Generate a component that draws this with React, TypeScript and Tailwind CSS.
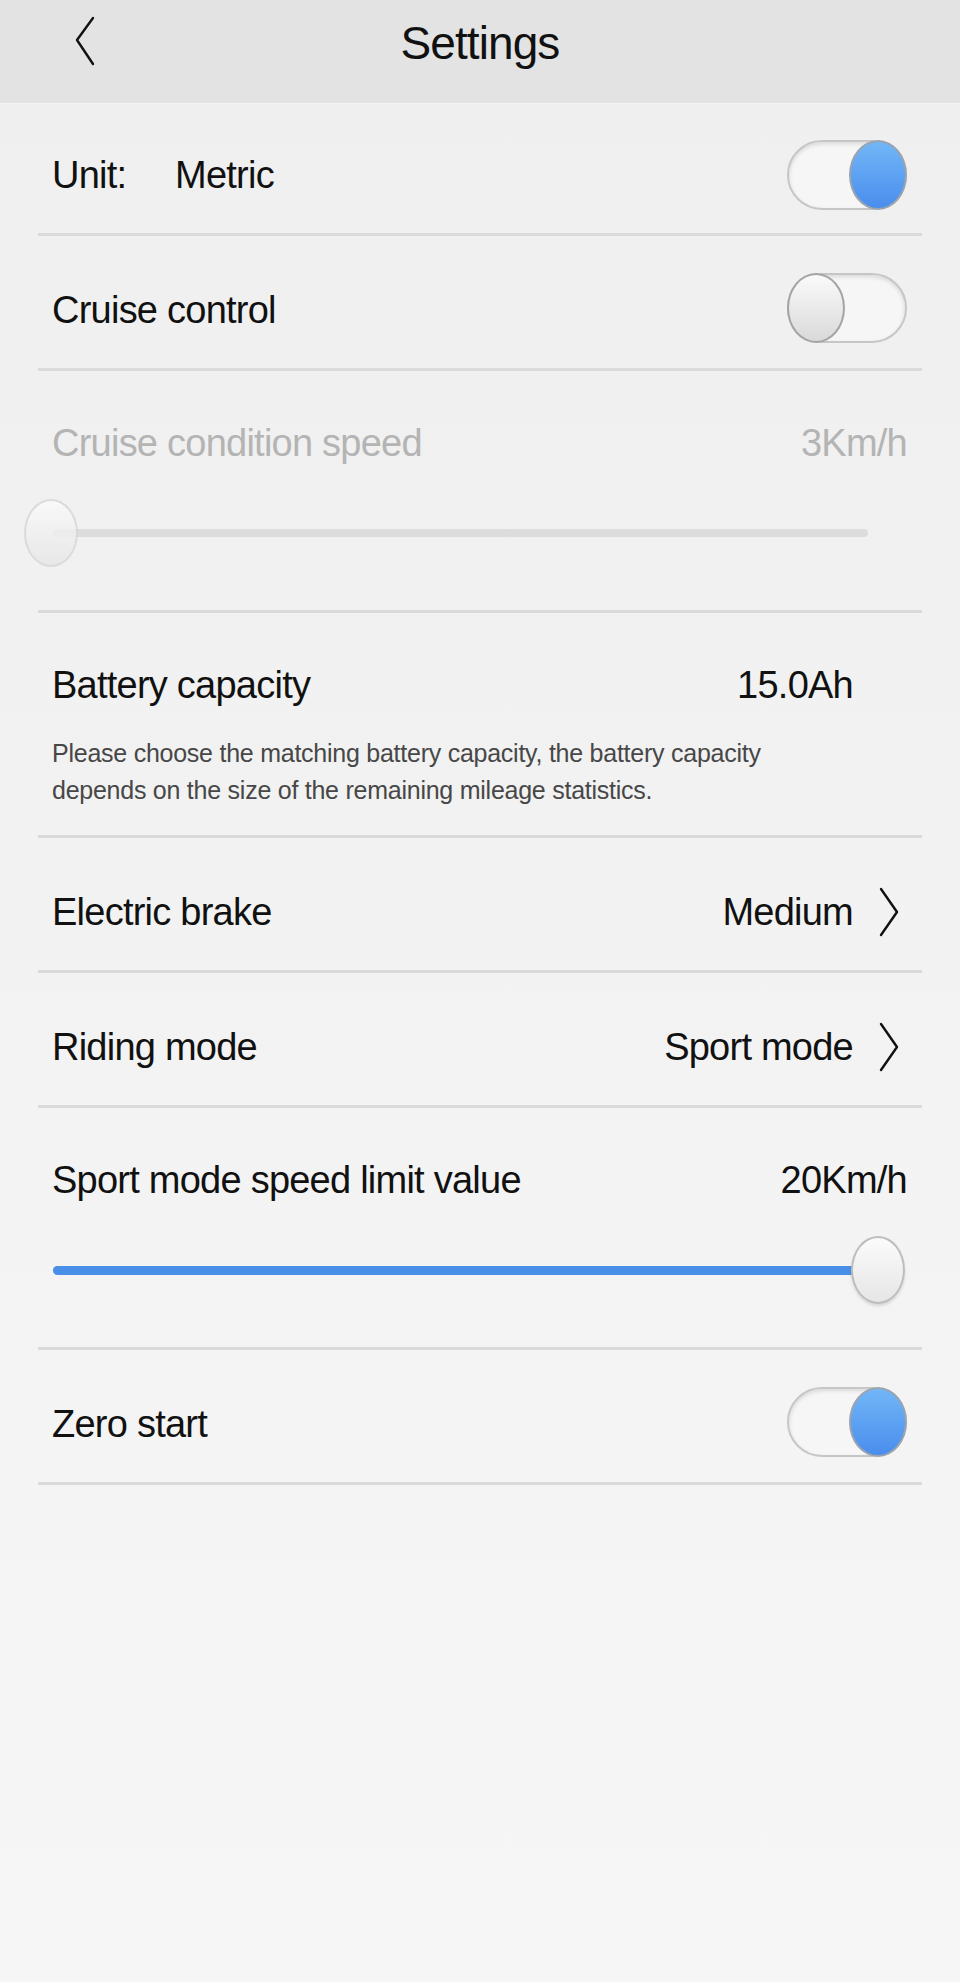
import React from "react";

const font = "font-['Liberation_Sans',Arial,sans-serif]";
const label = "text-[38px] leading-none tracking-[-0.02em]";

const Chevron = ({ dir = "right" }: { dir?: "left" | "right" }) => (
  <svg width="20" height="50" viewBox="0 0 20 50" fill="none">
    <polyline
      points={dir === "right" ? "2,2 18,25 2,48" : "18,2 2,24 18,48"}
      stroke="#111"
      strokeWidth="2.4"
      strokeLinecap="round"
      strokeLinejoin="round"
    />
  </svg>
);

const Toggle = ({ on }: { on: boolean }) => (
  <div
    className={`flex w-[120px] h-[70px] rounded-full border-2 border-[#c6c6c6] bg-[#f6f6f6] shadow-[inset_0_2px_4px_rgba(0,0,0,0.12)] ${
      on ? "justify-end" : "justify-start"
    }`}
  >
    {on ? (
      <div className="w-[58px] h-[70px] -m-[2px] rounded-[50%] border-2 border-[#9aa4b0] bg-linear-to-b from-[#72b6f7] to-[#4a8ded]" />
    ) : (
      <div className="w-[58px] h-[70px] -m-[2px] rounded-[50%] border-2 border-[#a4a4a4] bg-linear-to-b from-[#fafafa] to-[#d9d9d9]" />
    )}
  </div>
);

const Slider = ({ value, disabled }: { value: number; disabled?: boolean }) => {
  // thumb centre travels from 27px to 854px inside the 881px wide box
  const left = 27 + value * 827;
  return (
    <div className="relative ml-[-28px] w-[881px] h-[68px]">
      <div className="absolute left-[29px] right-[37px] top-[30px] h-[8px] rounded-full bg-[#dcdcdc]" />
      {value > 0 && (
        <div
          className="absolute left-[29px] top-[30px] h-[9px] rounded-full bg-[#4a8fe7]"
          style={{ width: left - 29 }}
        />
      )}
      <div
        className={`absolute top-0 w-[54px] h-[68px] rounded-[50%] border-2 bg-linear-to-b from-[#fbfbfb] to-[#e6e6e6] ${
          disabled ? "border-[#d6d6d6] opacity-80" : "border-[#bdbdbd] shadow-[0_2px_3px_rgba(0,0,0,0.12)]"
        }`}
        style={{ left: left - 27 }}
      />
    </div>
  );
};

const Sep = () => <div className="h-[3px] bg-[#dadada]" />;

const Row = ({ children }: { children: React.ReactNode }) => (
  <div className="h-[132px] pt-[12px] pl-[14px] flex items-center justify-between">{children}</div>
);

export default function App() {
  return (
    <div className={`${font} min-h-[1982px] w-[960px] bg-linear-to-b from-[#efefef] to-[#f6f6f6] text-[#111]`}>
      <header className="relative h-[104px] bg-[#e3e3e3] border-b border-[#f3f3f3] flex items-center justify-center">
        <div className="absolute left-[75px] top-[16px]">
          <Chevron dir="left" />
        </div>
        <h1 className="text-[46px] leading-none tracking-[-0.02em] pb-[18px]">Settings</h1>
      </header>

      <div className="mx-[38px]">
        <div className="h-[129px] pt-[12px] pl-[14px] pr-[15px] flex items-center justify-between">
          <div className={`flex ${label}`}>
            <span className="w-[123px]">Unit:</span>
            <span>Metric</span>
          </div>
          <Toggle on />
        </div>
        <Sep />

        <Row>
          <span className={`${label} pt-[4px]`}>Cruise control</span>
          <div className="pr-[15px]">
            <Toggle on={false} />
          </div>
        </Row>
        <Sep />

        <div className="h-[239px] pt-[52px] pl-[14px]">
          <div className={`h-[40px] pr-[15px] flex items-center justify-between ${label} text-[#b4b4b4]`}>
            <span>Cruise condition speed</span>
            <span>3Km/h</span>
          </div>
          <div className="mt-[36px]">
            <Slider value={0} disabled />
          </div>
        </div>
        <Sep />

        <div className="h-[222px] pt-[52px] pl-[14px]">
          <div className={`h-[40px] pr-[69px] flex items-center justify-between ${label}`}>
            <span>Battery capacity</span>
            <span>15.0Ah</span>
          </div>
          <p className="mt-[30px] text-[25px] leading-[37px] tracking-[-0.01em] text-[#474747]">
            Please choose the matching battery capacity, the battery capacity
            <br />
            depends on the size of the remaining mileage statistics.
          </p>
        </div>
        <Sep />

        <Row>
          <span className={`${label} pt-[4px]`}>Electric brake</span>
          <div className="flex items-center gap-[26px] pr-[23px] pt-[4px]">
            <span className={label}>Medium</span>
            <Chevron />
          </div>
        </Row>
        <Sep />

        <Row>
          <span className={`${label} pt-[4px]`}>Riding mode</span>
          <div className="flex items-center gap-[26px] pr-[23px] pt-[4px]">
            <span className={label}>Sport mode</span>
            <Chevron />
          </div>
        </Row>
        <Sep />

        <div className="h-[239px] pt-[52px] pl-[14px]">
          <div className={`h-[40px] pr-[15px] flex items-center justify-between ${label}`}>
            <span>Sport mode speed limit value</span>
            <span>20Km/h</span>
          </div>
          <div className="mt-[36px]">
            <Slider value={1} />
          </div>
        </div>
        <Sep />

        <Row>
          <span className={`${label} pt-[4px]`}>Zero start</span>
          <div className="pr-[15px]">
            <Toggle on />
          </div>
        </Row>
        <Sep />
      </div>
    </div>
  );
}
